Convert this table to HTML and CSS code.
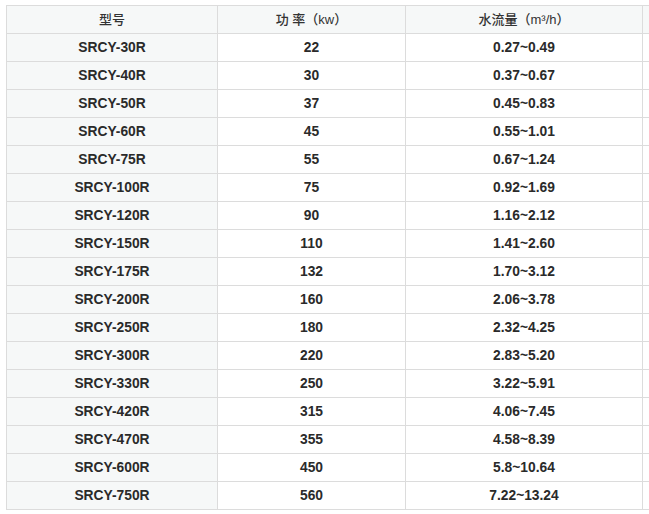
FILE: index.html
```html
<!DOCTYPE html>
<html lang="zh">
<head>
<meta charset="utf-8">
<link rel="stylesheet" href="styles.css">
</head>
<body>
<div class="wrap">
<table class="spec">
<colgroup>
<col class="c1"><col class="c2"><col class="c3"><col class="c4">
</colgroup>
<thead>
<tr><th>型号</th><th>功 率（kw）</th><th>水流量（m³/h）</th><th></th></tr>
</thead>
<tbody>
<tr><td class="m">SRCY-30R</td><td>22</td><td>0.27~0.49</td><td></td></tr>
<tr><td class="m">SRCY-40R</td><td>30</td><td>0.37~0.67</td><td></td></tr>
<tr><td class="m">SRCY-50R</td><td>37</td><td>0.45~0.83</td><td></td></tr>
<tr><td class="m">SRCY-60R</td><td>45</td><td>0.55~1.01</td><td></td></tr>
<tr><td class="m">SRCY-75R</td><td>55</td><td>0.67~1.24</td><td></td></tr>
<tr><td class="m">SRCY-100R</td><td>75</td><td>0.92~1.69</td><td></td></tr>
<tr><td class="m">SRCY-120R</td><td>90</td><td>1.16~2.12</td><td></td></tr>
<tr><td class="m">SRCY-150R</td><td>110</td><td>1.41~2.60</td><td></td></tr>
<tr><td class="m">SRCY-175R</td><td>132</td><td>1.70~3.12</td><td></td></tr>
<tr><td class="m">SRCY-200R</td><td>160</td><td>2.06~3.78</td><td></td></tr>
<tr><td class="m">SRCY-250R</td><td>180</td><td>2.32~4.25</td><td></td></tr>
<tr><td class="m">SRCY-300R</td><td>220</td><td>2.83~5.20</td><td></td></tr>
<tr><td class="m">SRCY-330R</td><td>250</td><td>3.22~5.91</td><td></td></tr>
<tr><td class="m">SRCY-420R</td><td>315</td><td>4.06~7.45</td><td></td></tr>
<tr><td class="m">SRCY-470R</td><td>355</td><td>4.58~8.39</td><td></td></tr>
<tr><td class="m">SRCY-600R</td><td>450</td><td>5.8~10.64</td><td></td></tr>
<tr><td class="m">SRCY-750R</td><td>560</td><td>7.22~13.24</td><td></td></tr>
</tbody>
</table>
</div>
</body>
</html>
```
FILE: styles.css
```css
html, body {
  margin: 0;
  padding: 0;
  background: #fff;
  overflow: hidden;
}
.wrap {
  padding: 5px 0 0 6px;
  width: 649px;
  box-sizing: border-box;
  overflow: hidden;
}
.spec {
  border-collapse: collapse;
  table-layout: fixed;
  width: 737px;
  font-family: "Liberation Sans", Arial, "Noto Sans CJK SC", sans-serif;
  font-size: 13px;
  color: #2a2a2a;
}
.c1 { width: 211px; }
.c2 { width: 188px; }
.c3 { width: 237px; }
.c4 { width: 101px; }
.spec th, .spec td {
  border: 1px solid #dcdcdc;
  height: 27px;
  padding: 0;
  text-align: center;
  vertical-align: middle;
  line-height: 16px;
}
.spec th {
  background: #f6f8f8;
  font-weight: 500;
  color: #333;
}
.spec td {
  font-weight: bold;
  font-size: 13.8px;
  background: #fff;
}
.spec td.m {
  background: #f6f8f8;
}
```
